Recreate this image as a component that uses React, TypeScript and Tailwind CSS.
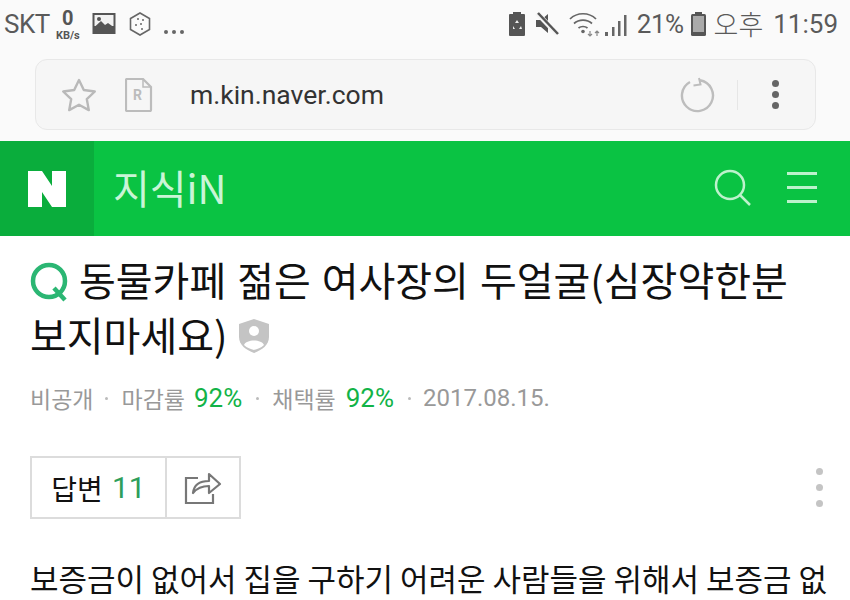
const KR = { fontFamily: '"Noto Sans CJK KR", "Noto Sans", sans-serif' };
const RB = { fontFamily: '"Roboto", sans-serif' };

function StatusBar() {
  return (
    <div className="h-[51px] flex items-start justify-between pl-[4px] pr-[12px] pt-[8px] text-[#555]" style={KR}>
      <div className="flex items-start">
        <span className="text-[26px] leading-[32px] tracking-[-0.5px] text-[#5a5a5a]" style={RB}>SKT</span>
        <div className="flex flex-col items-center ml-[4px] w-[28px] mt-[1px]">
          <span className="text-[20px] leading-[18px] font-bold text-[#555]" style={RB}>0</span>
          <span className="text-[11px] leading-[11px] font-bold text-[#555] mt-[3px]" style={RB}>KB/s</span>
        </div>
        <svg width="24" height="24" viewBox="0 0 24 24" className="ml-[10px] mt-[4px]">
          <rect x="0.5" y="1" width="23" height="21" fill="#555" />
          <rect x="2.5" y="3" width="19" height="11" fill="#f2f2f2" />
          <circle cx="7" cy="7" r="2" fill="#555" />
          <path d="M2.5 15L9 9l4 4 3-2 5.5 4v1h-19z" fill="#555" />
        </svg>
        <svg width="24" height="26" viewBox="0 0 24 26" className="ml-[12px] mt-[3px]" fill="none" stroke="#666" strokeWidth="1.6">
          <path d="M12 2l9.5 5.5v11L12 24l-9.5-5.5v-11z" />
          <circle cx="10" cy="8" r="1" fill="#666" stroke="none" />
          <circle cx="15" cy="9" r="1" fill="#666" stroke="none" />
          <circle cx="8" cy="14" r="1" fill="#666" stroke="none" />
          <circle cx="13" cy="13" r="1" fill="#666" stroke="none" />
          <circle cx="14" cy="18" r="1" fill="#666" stroke="none" />
        </svg>
        <div className="ml-[12px] mt-[22px] flex gap-[4px]">
          <span className="w-[4px] h-[4px] rounded-full bg-[#666]" />
          <span className="w-[4px] h-[4px] rounded-full bg-[#666]" />
          <span className="w-[4px] h-[4px] rounded-full bg-[#666]" />
        </div>
      </div>
      <div className="flex items-start">
        <svg width="18" height="24" viewBox="0 0 18 24" className="mt-[4px]">
          <path d="M5 0h8v2h3a1 1 0 011 1v20a1 1 0 01-1 1H2a1 1 0 01-1-1V3a1 1 0 011-1h3z" fill="#555" />
          <path d="M9 8l2 3H7zM5 14l2 3H5zM13 14l1 3h-3z" fill="#eee" />
        </svg>
        <svg width="24" height="24" viewBox="0 0 24 24" className="ml-[9px] mt-[4px]">
          <path d="M1 8h5l7-6v19l-7-6H1z" fill="#555" />
          <path d="M2 1l20 21" stroke="#f5f5f5" strokeWidth="5" />
          <path d="M3 1l20 21" stroke="#555" strokeWidth="2.5" />
        </svg>
        <svg width="34" height="26" viewBox="0 0 34 26" className="ml-[10px] mt-[3px]" fill="none" stroke="#666" strokeWidth="1.7">
          <path d="M1 8c7-7 19-7 26 0" />
          <path d="M5 12.5c5-4.5 13-4.5 18 0" />
          <path d="M9.500 17c2.500-2 6.500-2 9 0" />
          <circle cx="14" cy="20.500" r="1.800" fill="#666" stroke="none" />
          <path d="M21 20v5M19 23l2 2 2-2" stroke="#888" strokeWidth="1.2" />
          <path d="M28 25v-5M26 22l2-2 2 2" stroke="#888" strokeWidth="1.2" />
        </svg>
        <svg width="24" height="24" viewBox="0 0 24 24" className="ml-[2px] mt-[5px]" fill="#666">
          <rect x="0" y="19" width="3" height="4" />
          <rect x="7" y="14" width="2.500" height="9" />
          <rect x="13" y="8" width="2.500" height="15" />
          <rect x="19" y="2" width="2.500" height="21" />
        </svg>
        <span className="text-[26px] leading-[32px] text-[#5a5a5a] ml-[8px] tracking-[-0.5px]" style={RB}>21%</span>
        <svg width="15" height="24" viewBox="0 0 15 24" className="ml-[7px] mt-[4px]">
          <rect x="4" y="0" width="7" height="3" fill="#555" />
          <rect x="0" y="2" width="15" height="22" rx="1.500" fill="#555" />
          <rect x="2" y="4" width="11" height="16" fill="#aaa" />
        </svg>
        <span className="text-[27px] leading-[32px] text-[#5a5a5a] ml-[8px] font-light">오후</span>
        <span className="text-[26px] leading-[32px] text-[#5a5a5a] ml-[10px]" style={RB}>11:59</span>
      </div>
    </div>
  );
}

function UrlBar() {
  return (
    <div className="h-[90px] bg-[#fafafa] px-[35px] pt-[8px]">
      <div className="h-[71px] w-[781px] rounded-[12px] border border-[#e8e8e8] bg-[#f6f6f6] flex items-center">
        <svg width="36" height="36" viewBox="0 0 36 36" className="ml-[25px]" fill="none" stroke="#b9b9b9" strokeWidth="2.400" strokeLinejoin="round">
          <path d="M18 3l4.800 10 11 1.500-8 7.600 2 11L18 27.800 8.200 33.100l2-11-8-7.600 11-1.500z" />
        </svg>
        <div className="relative ml-[28px] w-[28px] h-[34px]">
          <svg width="28" height="34" viewBox="0 0 28 34" fill="none" stroke="#bcbcbc" strokeWidth="2.200">
            <path d="M2 1h16l8 8v23a1 1 0 01-1 1H2a1 1 0 01-1-1V2a1 1 0 011-1z" />
            <path d="M18 1v8h8" strokeWidth="1.500" />
          </svg>
          <span className="absolute left-[8px] top-[9px] text-[14px] leading-[16px] font-bold text-[#bcbcbc]" style={RB}>R</span>
        </div>
        <span className="ml-[37px] text-[26.500px] text-[#333]" style={RB}>m.kin.naver.com</span>
        <svg width="36" height="36" viewBox="0 0 36 36" className="ml-auto" fill="none" stroke="#bdbdbd" strokeWidth="2.400">
          <path d="M21 3.300a15.500 15.500 0 11-10 1.700" />
          <path d="M20 1l1.500 6.500-7 1" strokeWidth="2" />
        </svg>
        <div className="w-px h-[30px] bg-[#e6e6e6] ml-[22px]" />
        <div className="ml-[34px] mr-[36px] flex flex-col gap-[4px]">
          <span className="w-[7px] h-[7px] rounded-full bg-[#666]" />
          <span className="w-[7px] h-[7px] rounded-full bg-[#666]" />
          <span className="w-[7px] h-[7px] rounded-full bg-[#666]" />
        </div>
      </div>
    </div>
  );
}

function Header() {
  return (
    <div className="h-[95px] bg-[#0ac343] flex items-center">
      <div className="w-[94px] h-full bg-[#0aad3c] flex items-center justify-center">
        <svg width="38" height="36" viewBox="0 0 38 36" fill="#fff">
          <path d="M0 0h14l10 15V0h14v36H24L14 21v15H0z" />
        </svg>
      </div>
      <span className="ml-[19px] mb-[4px] text-[40px] leading-none text-[#c9f5d6]" style={KR}>지식iN</span>
      <svg width="38" height="38" viewBox="0 0 38 38" className="ml-auto mb-[2px]" fill="none" stroke="#bdf2cc" strokeWidth="2.500">
        <circle cx="16" cy="16" r="14" />
        <path d="M26 26l10 10" />
      </svg>
      <div className="ml-[35px] mr-[33px] flex flex-col gap-[11px] mb-[2px]">
        <span className="block w-[30px] h-[3px] bg-[#bdf2cc]" />
        <span className="block w-[30px] h-[3px] bg-[#bdf2cc]" />
        <span className="block w-[30px] h-[3px] bg-[#bdf2cc]" />
      </div>
    </div>
  );
}

function Dot({ className }: { className: string }) {
  return <span className={`w-[3px] h-[3px] rounded-full bg-[#bbb] ${className}`} />;
}

function Content() {
  return (
    <div className="h-[364px] bg-white overflow-hidden pl-[30px] pr-[30px]" style={KR}>
      <h1 className="mt-[16px] text-[40px] leading-[55px] font-normal text-[#111] [word-spacing:2px]">
        <svg width="40" height="40" viewBox="0 0 40 40" className="inline-block align-[-6px] mr-[9px]" fill="none" stroke="#2bb673" strokeWidth="4.500">
          <circle cx="19" cy="19" r="16" />
          <path d="M24 26l11 12" />
        </svg>
        동물카페 젊은 여사장의 두얼굴(심장약한분<br />보지마세요)
        <svg width="32" height="36" viewBox="0 0 32 36" className="inline-block align-[-3px] ml-[10px]">
          <path d="M16 1l15 5v13c0 8-7 13-15 16C8 32 1 27 1 19V6z" fill="#c4c4c4" />
          <circle cx="16" cy="13" r="5" fill="#fff" />
          <path d="M6 27c2-6 18-6 20 0-3 3-7 4-10 5-3-1-7-2-10-5z" fill="#fff" />
        </svg>
      </h1>
      <div className="mt-[20px] flex items-center text-[23px] leading-[32px] text-[#999]">
        <span>비공개</span>
        <Dot className="ml-[12px] mr-[13px]" />
        <span>마감률</span>
        <span className="ml-[9px] text-[26px] text-[#12b347]" style={RB}>92%</span>
        <Dot className="ml-[14px] mr-[13px]" />
        <span>채택률</span>
        <span className="ml-[10px] text-[26px] text-[#12b347]" style={RB}>92%</span>
        <Dot className="ml-[14px] mr-[12px]" />
        <span className="text-[24px] text-[#999]" style={RB}>2017.08.15.</span>
      </div>
      <div className="mt-[42px] flex items-center justify-between">
        <div className="h-[63px] flex border-2 border-[#dcdcdc]">
          <div className="w-[135px] flex items-center justify-center border-r-2 border-[#dcdcdc]">
            <span className="text-[28px] text-[#111]">답변</span>
            <span className="ml-[9px] text-[30px] text-[#2e9e5b]" style={RB}>11</span>
          </div>
          <div className="w-[72px] flex items-center justify-center">
            <svg width="38" height="34" viewBox="0 0 38 34" fill="none" stroke="#777" strokeWidth="2.200">
              <path d="M14 7H2v25h27v-9" />
              <path d="M9 22c1-9 8-12 16-12V3l11 10-11 9v-7c-7 0-12 2-16 7z" strokeLinejoin="round" />
            </svg>
          </div>
        </div>
        <div className="mr-[-3px] flex flex-col gap-[9px]">
          <span className="w-[7px] h-[7px] rounded-full bg-[#c4c4c4]" />
          <span className="w-[7px] h-[7px] rounded-full bg-[#c4c4c4]" />
          <span className="w-[7px] h-[7px] rounded-full bg-[#c4c4c4]" />
        </div>
      </div>
      <p className="mt-[39px] text-[31px] leading-[40px] text-[#111] whitespace-nowrap">보증금이 없어서 집을 구하기 어려운 사람들을 위해서 보증금 없</p>
    </div>
  );
}

export default function App() {
  return (
    <div className="w-[850px] h-[600px] overflow-hidden bg-[#fafafa]">
      <StatusBar />
      <UrlBar />
      <Header />
      <Content />
    </div>
  );
}
